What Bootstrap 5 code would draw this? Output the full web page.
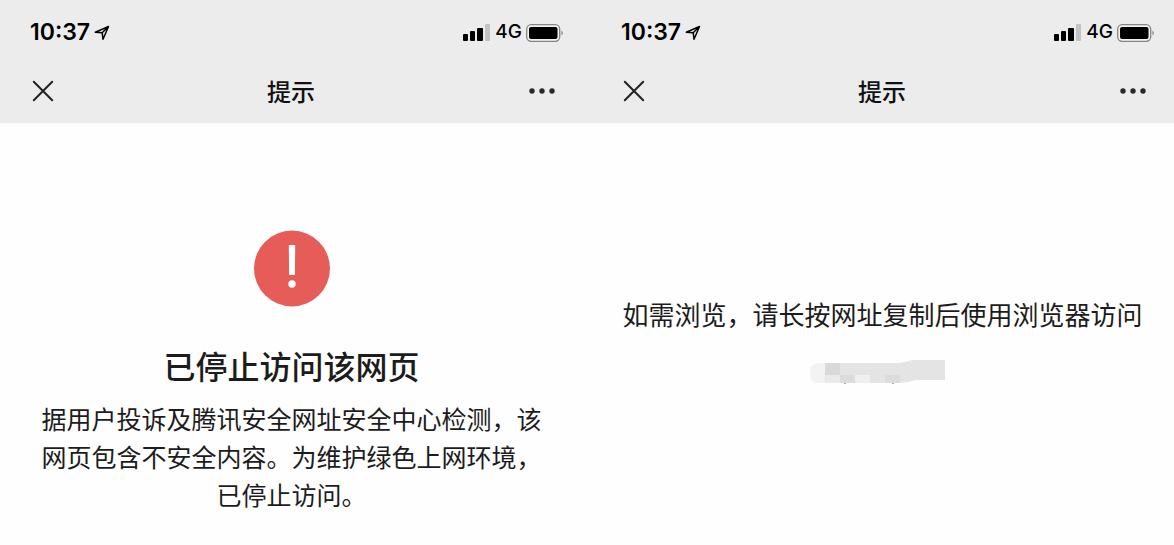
<!DOCTYPE html>
<html lang="zh-CN">
<head>
<meta charset="utf-8">
<meta name="viewport" content="width=device-width, initial-scale=1">
<title>提示</title>
<link href="https://cdn.jsdelivr.net/npm/bootstrap@5.3.0/dist/css/bootstrap.min.css" rel="stylesheet">
<style>
  body { font-family: "Noto Sans CJK SC", sans-serif; color: #1c1c1c; background: #fefefe; }
  .phone { flex: 1 1 calc(50% - 4px); min-width: 0; }
  .phone-first { flex-basis: calc(50% + 4px); }
  .phone-first > * { padding-right: 8px; }
  .topbar { background: #ececec; }
  .statusbar { font-family: Inter, "Liberation Sans", sans-serif; color: #000; height: 65px; padding: 0 19px 0 30px; }
  .clock { font-size: 23px; font-weight: 600; }
  .network { font-size: 19px; font-weight: 500; }
  .titlebar { height: 58px; padding: 0 27px 6px 32px; }
  .page-title { font-size: 24px; line-height: 36px; font-weight: 500; color: #111; }
  .stopped { padding-top: 107px; }
  .stopped h2 { font-size: 32px; line-height: 48px; font-weight: 500; margin-top: 34px; }
  .reason { font-size: 25px; line-height: 38px; max-width: 500px; margin-top: 10px; }
  .manual { padding-top: 171px; }
  .hint { font-size: 26px; line-height: 40px; margin-bottom: 26px; }
</style>
</head>
<body>
<svg class="d-none" aria-hidden="true">
  <symbol id="arrow" viewBox="0 0 16 16"><path d="M1.3 7.2 14.5 1.5 9 14.3 8.2 7.7Z M8.2 7.7 14.5 1.5" fill="none" stroke="#000" stroke-width="1.5" stroke-linejoin="round"/></symbol>
  <symbol id="signal" viewBox="0 0 28 18"><rect y="10" width="5" height="7" rx="1"/><rect x="7" y="7" width="5" height="10" rx="1"/><rect x="14" y="4" width="6" height="13" rx="1"/><rect x="22" width="5" height="17" rx="1" fill="#c2c2c2"/></symbol>
  <symbol id="battery" viewBox="0 0 38 18"><rect x=".7" y=".7" width="33" height="16.6" rx="4.5" fill="#f3f3f3" stroke="#858585" stroke-width="1.3"/><rect x="3" y="3" width="28.5" height="12" rx="2"/><path d="M35.5 6.5Q38 9 35.5 11.5Z" fill="#777"/></symbol>
  <symbol id="close" viewBox="0 0 22 22"><path d="m1.8 1.8 18.4 18.4m0-18.4-18.4 18.4" stroke="#222" stroke-width="2" stroke-linecap="round"/></symbol>
  <symbol id="more" viewBox="0 0 28 8"><g fill="#292929"><circle cx="4" cy="4" r="2.7"/><circle cx="14" cy="4" r="2.7"/><circle cx="24" cy="4" r="2.7"/></g></symbol>
</svg>
<div class="d-flex">
  <section class="phone phone-first">
    <header class="topbar">
      <div class="statusbar d-flex align-items-center justify-content-between">
        <div class="d-flex align-items-center gap-1"><span class="clock">10:37</span><svg width="16" height="16"><use href="#arrow"/></svg></div>
        <div class="d-flex align-items-center gap-1"><svg width="28" height="18"><use href="#signal"/></svg><span class="network">4G</span><svg width="38" height="18"><use href="#battery"/></svg></div>
      </div>
      <div class="titlebar d-flex align-items-center justify-content-between">
        <button type="button" class="btn border-0 p-0 d-flex" aria-label="关闭"><svg width="22" height="22"><use href="#close"/></svg></button>
        <h1 class="page-title m-0">提示</h1>
        <button type="button" class="btn border-0 p-0 d-flex" aria-label="更多"><svg width="28" height="8"><use href="#more"/></svg></button>
      </div>
    </header>
    <main class="stopped text-center">
      <svg class="d-block mx-auto" width="77" height="77" viewBox="0 0 77 77" role="img" aria-label="警告"><circle cx="39" cy="38.5" r="38" fill="#e65c58"/><path d="M35.8 15h6.4l-.3 30h-5.8Z" fill="#fff"/><circle cx="39" cy="54" r="3.7" fill="#fff"/></svg>
      <h2 class="mb-0">已停止访问该网页</h2>
      <p class="reason mx-auto mb-0">据用户投诉及腾讯安全网址安全中心检测，该网页包含不安全内容。为维护绿色上网环境，已停止访问。</p>
    </main>
  </section>
  <section class="phone">
    <header class="topbar">
      <div class="statusbar d-flex align-items-center justify-content-between">
        <div class="d-flex align-items-center gap-1"><span class="clock">10:37</span><svg width="16" height="16"><use href="#arrow"/></svg></div>
        <div class="d-flex align-items-center gap-1"><svg width="28" height="18"><use href="#signal"/></svg><span class="network">4G</span><svg width="38" height="18"><use href="#battery"/></svg></div>
      </div>
      <div class="titlebar d-flex align-items-center justify-content-between">
        <button type="button" class="btn border-0 p-0 d-flex" aria-label="关闭"><svg width="22" height="22"><use href="#close"/></svg></button>
        <h1 class="page-title m-0">提示</h1>
        <button type="button" class="btn border-0 p-0 d-flex" aria-label="更多"><svg width="28" height="8"><use href="#more"/></svg></button>
      </div>
    </header>
    <main class="manual text-center">
      <p class="hint">如需浏览，请长按网址复制后使用浏览器访问</p>
      <svg class="d-block mx-auto" width="146" height="26" viewBox="0 0 146 26" aria-hidden="true">
        <path d="M6 3H15V23H6Q0 21 0 13 0 5 6 3Z" fill="#f3f3f3"/>
        <path d="M15 3H90Q96 2 102 0H135V20H105Q98 23 90 23H15Z" fill="#e4e4e4"/>
        <path d="M15 3h15v12H15Z" fill="#d9d9d9"/><path d="M15 15h15v8H15Z" fill="#e9e9e9"/>
        <path d="M30 15h15v8H30ZM75 15h15v8H75Z" fill="#dcdcdc"/><path d="M45 15h15v8H45Z" fill="#efefef"/>
        <path d="M34 23h2v1h-2ZM82 23h2v1h-2Z" fill="#aaa"/>
      </svg>
    </main>
  </section>
</div>
<script src="https://cdn.jsdelivr.net/npm/bootstrap@5.3.0/dist/js/bootstrap.bundle.min.js"></script>
</body>
</html>
